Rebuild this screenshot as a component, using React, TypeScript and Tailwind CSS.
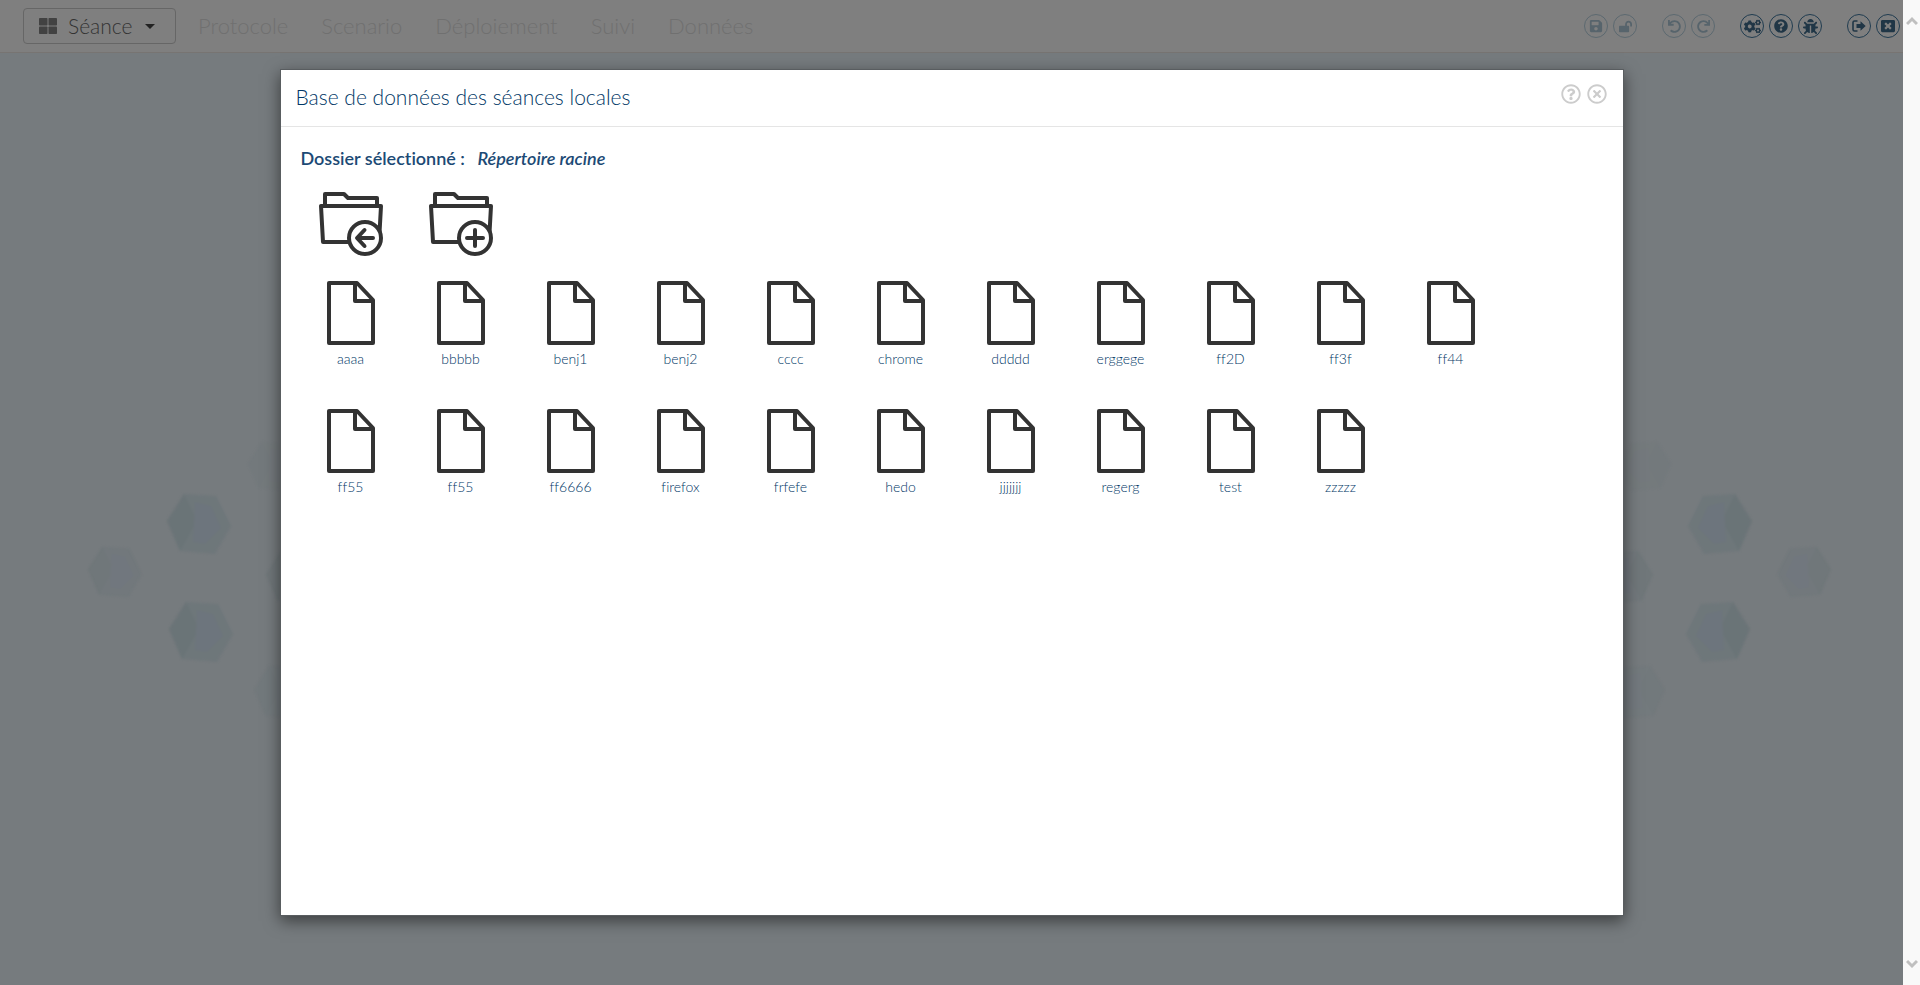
import type { ReactNode } from "react";
import {
  FaBug,
  FaCogs,
  FaLockOpen,
  FaQuestionCircle,
  FaRedo,
  FaRegQuestionCircle,
  FaRegTimesCircle,
  FaSave,
  FaUndo,
  FaWindowClose,
} from "react-icons/fa";

const menus = ["Protocole", "Scenario", "Déploiement", "Suivi", "Données"];

const files = [
  "aaaa", "bbbbb", "benj1", "benj2", "cccc", "chrome", "ddddd", "erggege", "ff2D", "ff3f", "ff44",
  "ff55", "ff55", "ff6666", "firefox", "frfefe", "hedo", "jjjjjjj", "regerg", "test", "zzzzz",
];

function SignOutIcon() {
  return (
    <svg viewBox="0 0 14 12" className="h-3 w-3.5" aria-hidden="true">
      <path d="M5.5 1H2.5Q1 1 1 2.5V9.500Q1 11 2.500 11H5.500" fill="none" stroke="currentColor" strokeWidth="1.600" />
      <path d="M4.500 4H8.500V1.200L13.700 6L8.500 10.800V8H4.500Z" fill="currentColor" />
    </svg>
  );
}

type Tool = { label: string; icon: ReactNode };

const toolGroups: { faded: boolean; tools: Tool[] }[] = [
  {
    faded: true,
    tools: [
      { label: "Enregistrer", icon: <FaSave size={14} /> },
      { label: "Déverrouiller", icon: <FaLockOpen size={13} /> },
    ],
  },
  {
    faded: true,
    tools: [
      { label: "Annuler", icon: <FaUndo size={13} /> },
      { label: "Rétablir", icon: <FaRedo size={13} /> },
    ],
  },
  {
    faded: false,
    tools: [
      { label: "Paramètres", icon: <FaCogs size={17} /> },
      { label: "Aide", icon: <FaQuestionCircle size={14} /> },
      { label: "Signaler un bug", icon: <FaBug size={15} /> },
    ],
  },
  {
    faded: false,
    tools: [
      { label: "Déconnexion", icon: <SignOutIcon /> },
      { label: "Quitter", icon: <FaWindowClose size={14} /> },
    ],
  },
];

function Navbar() {
  return (
    <header className="flex h-[53px] items-center border-b border-[#777472] bg-[#7f7f7f] pr-[3px] pl-[23px]">
      <button
        type="button"
        className="flex h-9 w-[153px] items-center rounded border border-[#666] pl-[15px] text-[21px] leading-6 font-light text-[#333]"
      >
        <svg viewBox="0 0 18 16" className="h-4 w-[18px]" fill="#424242" aria-hidden="true">
          <rect width="8.500" height="7.500" rx="0.800" />
          <rect x="9.500" width="8.500" height="7.500" rx="0.800" />
          <rect y="8.500" width="8.500" height="7.500" rx="0.800" />
          <rect x="9.500" y="8.500" width="8.500" height="7.500" rx="0.800" />
        </svg>
        <span className="ml-[11px]">Séance</span>
        <svg viewBox="0 0 10 5" className="ml-[13px] h-[5px] w-2.5" fill="#222" aria-hidden="true">
          <path d="M0 0H10L5 5Z" />
        </svg>
      </button>
      <nav className="ml-[22px] flex gap-[33px] text-[22px] leading-6 font-light text-[#707070]">
        {menus.map((menu) => (
          <a key={menu} href="#">
            {menu}
          </a>
        ))}
      </nav>
      <div className="ml-auto flex gap-[25px]">
        {toolGroups.map((group, index) => (
          <div key={index} className="flex gap-[5px]">
            {group.tools.map((tool) => (
              <button
                key={tool.label}
                type="button"
                aria-label={tool.label}
                disabled={group.faded}
                className={
                  group.faded
                    ? "flex size-6 items-center justify-center rounded-full border border-[#5c6970] text-[#57646c]"
                    : "flex size-6 items-center justify-center rounded-full border border-[#203c50] text-[#203646]"
                }
              >
                {tool.icon}
              </button>
            ))}
          </div>
        ))}
      </div>
    </header>
  );
}

function Hexagon({ x, y, r, opacity }: { x: number; y: number; r: number; opacity: number }) {
  return (
    <g transform={`translate(${x} ${y}) scale(${r / 32})`} opacity={opacity}>
      <path d="M-15-30L17-28L32 2L16 30L-19 27L-32-3Z" fill="#6e777b" />
      <path d="M-15-30L-2-3L-19 27L-32-3Z" fill="#6a7477" />
      <path d="M-4-22L12-18L22 4L6 20L-6 18Z" fill="#6d757e" />
    </g>
  );
}

function Cluster({ className }: { className: string }) {
  return (
    <svg viewBox="0 0 240 320" className={className} aria-hidden="true">
      <Hexagon x={139} y={95} r={32} opacity={0.9} />
      <Hexagon x={141} y={203} r={32} opacity={0.9} />
      <Hexagon x={55} y={143} r={27} opacity={0.5} />
      <Hexagon x={214} y={37} r={26} opacity={0.2} />
      <Hexagon x={234} y={148} r={28} opacity={0.5} />
      <Hexagon x={222} y={263} r={28} opacity={0.3} />
    </svg>
  );
}

function FileIcon() {
  return (
    <svg viewBox="0 0 64 64" className="size-16" fill="none" stroke="#333" strokeWidth="4" strokeLinejoin="round" aria-hidden="true">
      <path d="M10 2H38L54 19V62H10Z" />
      <path d="M36 2V20H54" />
    </svg>
  );
}

function FolderIcon({ action }: { action: "back" | "add" }) {
  return (
    <svg viewBox="0 0 64 64" className="size-16" fill="none" stroke="#333" strokeWidth="4" strokeLinejoin="round" aria-hidden="true">
      <path d="M6 14V2H25L29 6H58V14" />
      <path d="M2 14H62L60 50H4Z" />
      <circle cx="46" cy="46" r="16" fill="#fff" />
      <path
        d={action === "back" ? "M54 46H39M45.500 38L38 46L45.500 54" : "M46 38V54M38 46H54"}
        strokeLinecap="round"
      />
    </svg>
  );
}

function Dialog() {
  return (
    <section
      role="dialog"
      aria-labelledby="dialog-title"
      className="h-[86vh] w-[70vw] border border-[#595d60] bg-white text-[#1c4a75] shadow-[0_5px_15px_rgba(0,0,0,0.5)]"
    >
      <div className="flex h-[57px] items-start justify-between border-b border-[#e5e5e5] pt-3.5 pr-4 pl-[15px]">
        <h1 id="dialog-title" className="text-[21px] leading-[26px] font-light text-[#003766]">
          Base de données des séances locales
        </h1>
        <div className="flex gap-1.5 text-[#ccc]">
          <button type="button" aria-label="Aide">
            <FaRegQuestionCircle size={20} />
          </button>
          <button type="button" aria-label="Fermer">
            <FaRegTimesCircle size={20} />
          </button>
        </div>
      </div>
      <div className="px-[15px] pt-5">
        <p className="pl-[5px] text-[18px] leading-[22px] font-semibold">
          Dossier sélectionné : <em className="ml-2">Répertoire racine</em>
        </p>
        <div className="mt-[23px] flex">
          <button type="button" aria-label="Dossier parent" className="flex w-[110px] justify-center">
            <FolderIcon action="back" />
          </button>
          <button type="button" aria-label="Nouveau dossier" className="flex w-[110px] justify-center">
            <FolderIcon action="add" />
          </button>
        </div>
        <ul className="mt-[25px] flex flex-wrap">
          {files.map((file, index) => (
            <li key={index} className="h-32 w-[110px]">
              <button type="button" className="flex w-full flex-col items-center">
                <FileIcon />
                <span className="mt-1.5 text-[14px] leading-4 font-light text-[#003766]">{file}</span>
              </button>
            </li>
          ))}
        </ul>
      </div>
    </section>
  );
}

export default function App() {
  return (
    <div className="flex h-screen overflow-hidden bg-[#767b7e] font-['Century_Gothic',Lato,sans-serif] [font-variant-ligatures:none]">
      <div className="relative min-w-0 flex-1">
        <Navbar />
        <Cluster className="absolute top-[429px] left-[60px] w-60 blur-[1px]" />
        <Cluster className="absolute top-[429px] right-11 w-60 -scale-x-100 blur-[1px]" />
        <div className="absolute inset-0 flex items-start justify-center pt-[7vh]">
          <Dialog />
        </div>
      </div>
      <div className="flex w-[17px] flex-col items-center justify-between bg-[#f9f9f9] py-4" aria-hidden="true">
        <svg viewBox="0 0 12 10" className="h-2.5 w-3" fill="none" stroke="#bfbfbf" strokeWidth="3">
          <path d="M1 8L6 3L11 8" />
        </svg>
        <svg viewBox="0 0 12 10" className="h-2.5 w-3" fill="none" stroke="#bfbfbf" strokeWidth="3">
          <path d="M1 2L6 7L11 2" />
        </svg>
      </div>
    </div>
  );
}
